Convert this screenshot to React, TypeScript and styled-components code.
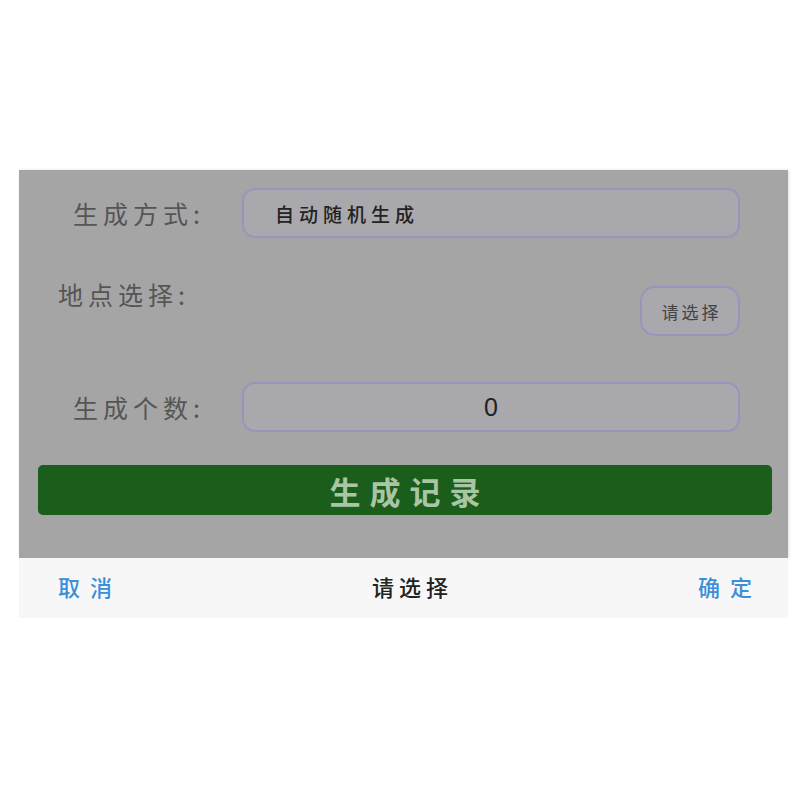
import React from 'react';
import styled, { createGlobalStyle } from 'styled-components';

const GlobalStyle = createGlobalStyle`
  html, body {
    margin: 0;
    padding: 0;
    background: #ffffff;
    font-family: "Noto Sans CJK SC", "Noto Sans", sans-serif;
  }
`;

const Page = styled.div`
  width: 800px;
  height: 800px;
  padding-top: 170px;
  box-sizing: border-box;
  display: flex;
  flex-direction: column;
  align-items: flex-start;
`;

const Sheet = styled.div`
  margin-left: 19px;
  width: 769px;
  display: flex;
  flex-direction: column;
`;

const Panel = styled.div`
  background: #a5a5a5;
  padding: 18px 16px 43px 19px;
  display: flex;
  flex-direction: column;
  box-shadow: 1px 0 3px rgba(0, 0, 0, 0.12);
`;

const Row = styled.div<{ indent: number; gap: number; align?: string }>`
  display: flex;
  align-items: ${({ align }) => align || 'center'};
  padding-left: ${({ indent }) => indent}px;
  padding-right: 32px;
  margin-top: ${({ gap }) => gap}px;
`;

const Label = styled.div<{ offset?: number }>`
  width: 169px;
  flex-shrink: 0;
  font-size: 25px;
  color: #555555;
  letter-spacing: 5px;
  white-space: nowrap;
  margin-top: ${({ offset }) => offset || 0}px;
`;

const Field = styled.div<{ center?: boolean }>`
  flex: 1;
  height: 50px;
  box-sizing: border-box;
  border: 2px solid #9d92bd;
  border-radius: 13px;
  background: #a9a8ac;
  display: flex;
  align-items: center;
  justify-content: ${({ center }) => (center ? 'center' : 'flex-start')};
  padding-left: ${({ center }) => (center ? 0 : 31)}px;
  color: #222222;
  font-size: ${({ center }) => (center ? 25 : 19)}px;
  letter-spacing: ${({ center }) => (center ? 0 : 5)}px;
  font-family: ${({ center }) =>
    center ? '"Liberation Sans", Arial, sans-serif' : '"Noto Sans CJK SC", sans-serif'};
  font-weight: ${({ center }) => (center ? 400 : 500)};
`;

const Spacer = styled.div`
  flex: 1;
`;

const PickButton = styled.div`
  width: 100px;
  height: 50px;
  margin-top: 2px;
  box-sizing: border-box;
  border: 2px solid #9d92bd;
  border-radius: 15px;
  background: #a9a8ac;
  display: flex;
  align-items: center;
  justify-content: center;
  font-size: 17px;
  letter-spacing: 3px;
  padding-left: 3px;
  color: #444444;
`;

const GenerateButton = styled.div`
  margin-top: 33px;
  height: 50px;
  background: #1b5e1c;
  border-radius: 5px;
  display: flex;
  align-items: center;
  justify-content: center;
  color: #a8c6a4;
  font-size: 31px;
  font-weight: 700;
  letter-spacing: 9px;
  padding-left: 9px;
`;

const Toolbar = styled.div`
  height: 60px;
  box-sizing: border-box;
  padding: 0 36px 5px 39px;
  background: #f7f7f7;
  display: flex;
  align-items: center;
  justify-content: space-between;
`;

const ToolAction = styled.div`
  font-size: 22px;
  font-weight: 500;
  color: #3a8fd8;
  letter-spacing: 10px;
  width: 120px;
  &:last-child {
    text-align: right;
    margin-right: -10px;
  }
`;

const ToolTitle = styled.div`
  font-size: 22px;
  font-weight: 500;
  color: #222222;
  letter-spacing: 5px;
  padding-left: 5px;
`;

export default function App() {
  return (
    <>
      <GlobalStyle />
      <Page>
        <Sheet>
          <Panel>
            <Row indent={35} gap={0}>
              <Label>生成方式:</Label>
              <Field>自动随机生成</Field>
            </Row>
            <Row indent={20} gap={46} align="flex-start">
              <Label offset={-8}>地点选择:</Label>
              <Spacer />
              <PickButton>请选择</PickButton>
            </Row>
            <Row indent={35} gap={46}>
              <Label>生成个数:</Label>
              <Field center>0</Field>
            </Row>
            <GenerateButton>生成记录</GenerateButton>
          </Panel>
          <Toolbar>
            <ToolAction>取消</ToolAction>
            <ToolTitle>请选择</ToolTitle>
            <ToolAction>确定</ToolAction>
          </Toolbar>
        </Sheet>
      </Page>
    </>
  );
}
